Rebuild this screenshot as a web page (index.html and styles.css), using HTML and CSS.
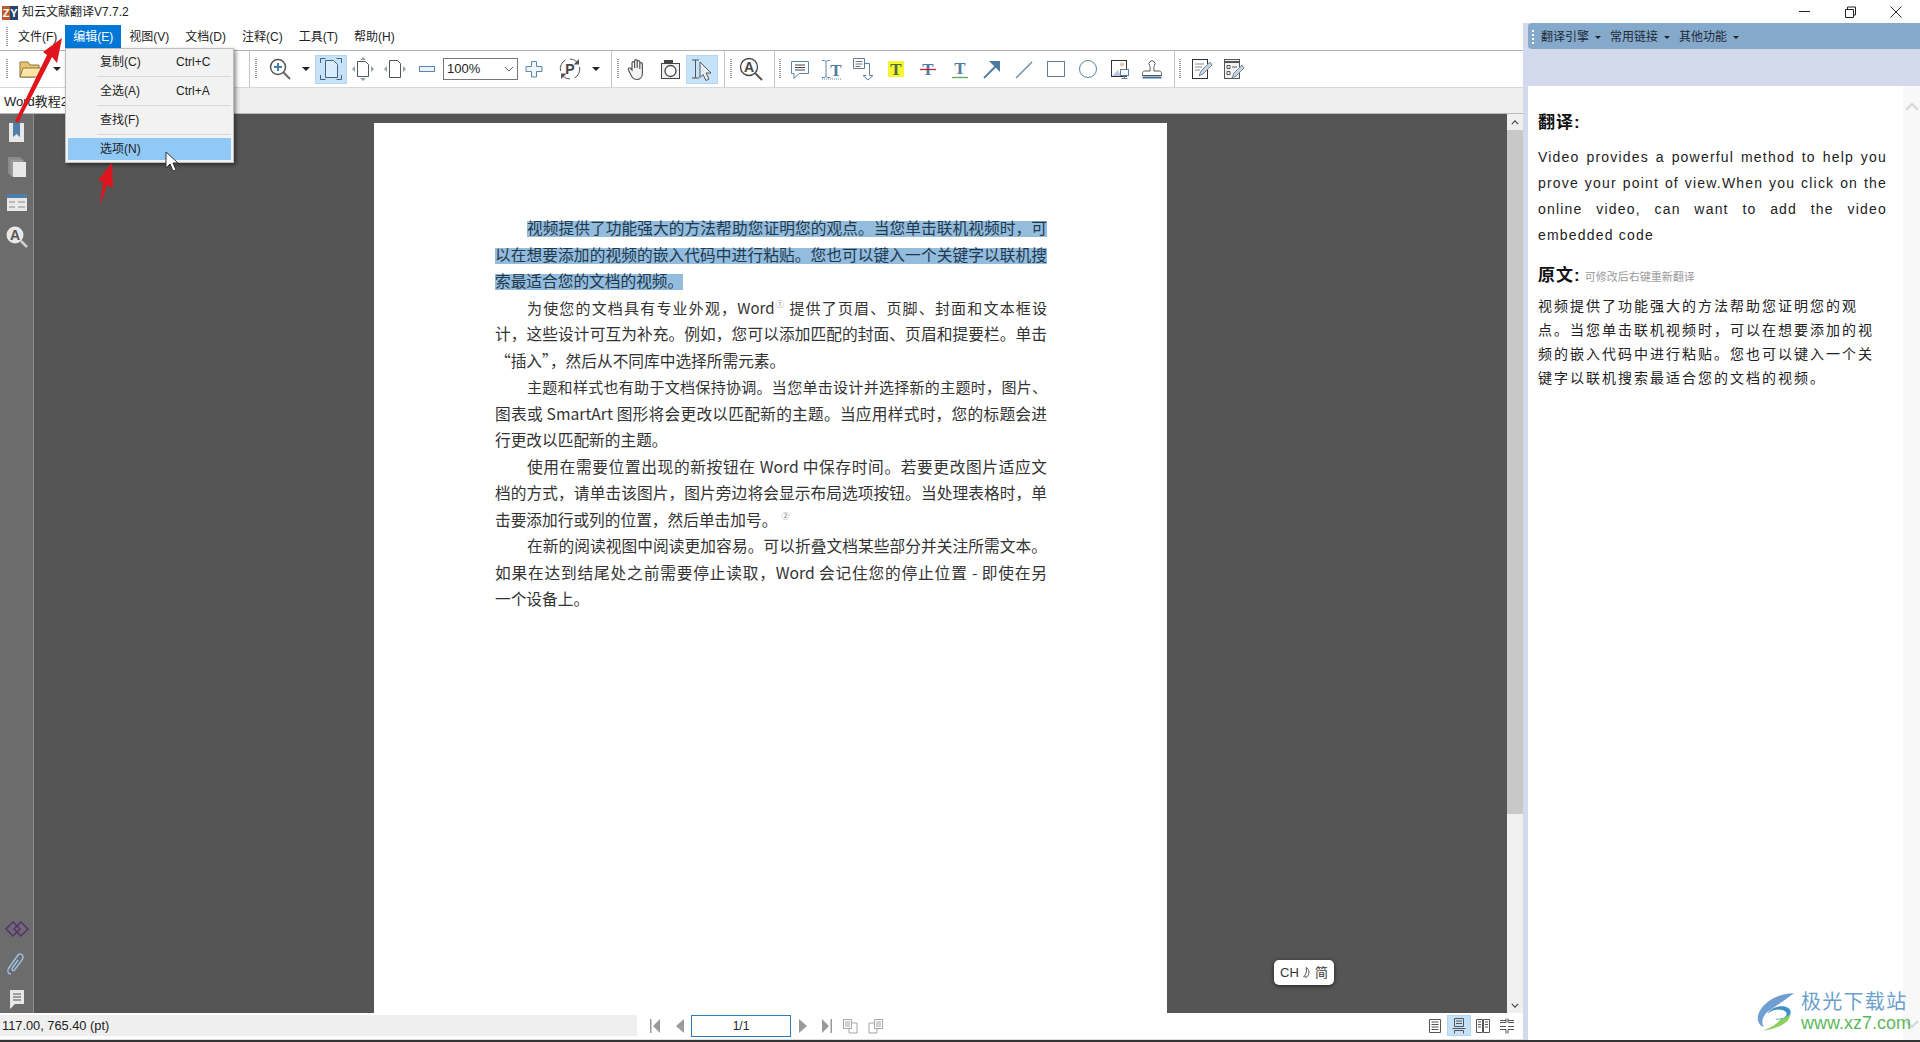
FILE: index.html
```html
<!DOCTYPE html>
<html lang="zh">
<head>
<meta charset="utf-8">
<title>知云文献翻译V7.7.2</title>
<link rel="stylesheet" href="styles.css">
</head>
<body>
<div class="app">
  <header class="titlebar">
    <div class="logo"><span class="logo-z">Z</span><span class="logo-y">Y</span></div>
    <div class="title">知云文献翻译V7.7.2</div>
    <div class="winbtns">
      <svg class="winbtn" viewBox="0 0 46 24"><path d="M18 11.5h11" stroke="#222" fill="none"/></svg>
      <svg class="winbtn" viewBox="0 0 46 24"><path d="M18.5 9.5h8v8h-8zM20.5 9.5v-2.5h8v8h-2" stroke="#222" fill="none"/></svg>
      <svg class="winbtn" viewBox="0 0 46 24"><path d="M17.5 6.5l11 11M28.5 6.5l-11 11" stroke="#222" fill="none"/></svg>
    </div>
  </header>
  <div class="body">
    <div class="leftcol">
      <nav class="menubar">
        <i class="grip grip-menu"></i>
        <span class="mitem">文件(F)</span>
        <span class="mitem mitem-on">编辑(E)</span>
        <span class="mitem">视图(V)</span>
        <span class="mitem">文档(D)</span>
        <span class="mitem">注释(C)</span>
        <span class="mitem">工具(T)</span>
        <span class="mitem">帮助(H)</span>
      </nav>
      <div class="toolbar">
        <i class="grip g1"></i>
        <span class="tool t-folder"><svg class="ic" viewBox="0 0 24 24"><path d="M1 20V5h8l2 3h9v12z" fill="#e9c46f" stroke="#8a7440"/><path d="M1 20l3-9h19l-3 9z" fill="#fbe6a6" stroke="#8a7440"/></svg></span>
        <span class="drop"><i class="tri"></i></span>
        <i class="sep s-a"></i>
        <i class="grip g2"></i>
        <span class="tool t-zoom"><svg class="ic" viewBox="0 0 24 24"><circle cx="10" cy="10" r="7.5" fill="#fff" stroke="#555" stroke-width="1.5"/><path d="M10 6v8M6 10h8" stroke="#3f7fb5" stroke-width="2"/><path d="M15.5 15.5L22 22" stroke="#666" stroke-width="2"/></svg></span>
        <span class="drop d-zoom"><i class="tri"></i></span>
        <span class="tool tool-on"><svg class="ic" viewBox="0 0 24 24"><path d="M6.500 3.500h8l4 4v13h-12z" fill="#d8ecfb" stroke="#45617a"/><path d="M1.500 6V1.500h5M22.500 6V1.500h-5M1.500 18v4.500h5M22.500 18v4.500h-5" fill="none" stroke="#45617a"/></svg></span>
        <span class="tool"><svg class="ic" viewBox="0 0 24 24"><path d="M6.500 4.500h8l3 3v12h-11z" fill="#fff" stroke="#555"/><path d="M12 0l3 3H9zM12 24l3-3H9zM1 12l3-3v6zM23 12l-3-3v6z" fill="#8aa0b5"/></svg></span>
        <span class="tool"><svg class="ic" viewBox="0 0 24 24"><path d="M6.500 3.500h8l3 3v14h-11z" fill="#fff" stroke="#555"/><path d="M1 12l3-3v6zM23 12l-3-3v6z" fill="#8aa0b5"/></svg></span>
        <span class="tool"><svg class="ic" viewBox="0 0 24 24"><rect x="4.500" y="9.500" width="15" height="5" fill="#eaf2f9" stroke="#5d86aa"/></svg></span>
        <div class="select"><span>100%</span><svg class="chev" viewBox="0 0 10 6"><path d="M1 1l4 4 4-4" fill="none" stroke="#666"/></svg></div>
        <span class="tool"><svg class="ic" viewBox="0 0 24 24"><path d="M9.500 4.500h5v5h5.500v5h-5.500v5.500h-5v-5.500H4v-5h5.500z" fill="#f2f7fb" stroke="#5d86aa"/></svg></span>
        <span class="tool t-p"><svg class="ic" viewBox="0 0 24 24"><path d="M2.500 14a10 10 0 0 1 5-11M12 2a10 10 0 0 1 7 3M21.500 10a10 10 0 0 1-5 11M12 22a10 10 0 0 1-7-3" fill="none" stroke="#555"/><path d="M21 2v5.500h-5.500zM3 22v-5.500h5.500z" fill="#555"/><text x="12" y="17" class="ptxt" text-anchor="middle">P</text></svg></span>
        <span class="drop d-p"><i class="tri"></i></span>
        <i class="sep s-b"></i>
        <i class="grip g3"></i>
        <span class="tool t-hand"><svg class="ic" viewBox="0 0 24 24"><path d="M7 13V6a1.300 1.300 0 0 1 2.600 0v5V4a1.300 1.300 0 0 1 2.600 0v7V5a1.300 1.300 0 0 1 2.600 0v7V7a1.300 1.300 0 0 1 2.600 0v9c0 4-2.500 6.500-5.500 6.500s-4-1-5.500-3.500L3.500 13c-1-1.500 1-3 2.200-1.500z" fill="#f4f4f4" stroke="#555" stroke-width="1.200"/></svg></span>
        <span class="tool t-cam"><svg class="ic" viewBox="0 0 24 24"><rect x="3.500" y="6.500" width="18" height="15" fill="#efefef" stroke="#444"/><rect x="6" y="3" width="9" height="4" fill="#444"/><circle cx="12.500" cy="14" r="5.500" fill="#fff" stroke="#444" stroke-width="1.300"/></svg></span>
        <span class="tool tool-on"><svg class="ic" viewBox="0 0 24 24"><path d="M2 3h7M5.500 3v18M2 21h7" fill="none" stroke="#555"/><path d="M10 5l11 11h-5l3 6-3 1.500-3-6-3 3z" fill="#e6f0f8" stroke="#555"/></svg></span>
        <i class="sep s-c"></i>
        <i class="grip g4"></i>
        <span class="tool t-a"><svg class="ic" viewBox="0 0 24 24"><circle cx="10" cy="10" r="8.500" fill="#fff" stroke="#444" stroke-width="1.300"/><text x="10" y="15" class="atxt" text-anchor="middle">A</text><path d="M16 16l7 7" stroke="#555" stroke-width="2"/></svg></span>
        <i class="sep s-c2"></i>
        <i class="grip g5"></i>
        <span class="tool t-c"><svg class="ic" viewBox="0 0 24 24"><path d="M3.500 4.500h17v12H11l-5 5v-5H3.500z" fill="#fff" stroke="#5d86aa"/><path d="M7 8h10M7 10.500h10M7 13h10" stroke="#444"/></svg></span>
        <span class="tool"><svg class="ic" viewBox="0 0 24 24"><path d="M2 3.500h2.500l1.500 1 1.500-1H10M6 4.500v15M2 20.500h2.500l1.500-1 1.500 1H10" fill="none" stroke="#5d86aa"/><text x="16" y="19" class="ttxt" text-anchor="middle">T</text><path d="M2 22h20" stroke="#5d86aa" stroke-dasharray="1 1"/></svg></span>
        <span class="tool"><svg class="ic" viewBox="0 0 24 24"><path d="M1.500 1.500h11v10h-11z" fill="#fff" stroke="#5d7f9c"/><path d="M3.500 4.500h7M3.500 7h7M3.500 9.500h5" stroke="#777"/><path d="M13 6.500h4.500v12h3.500l-5 4.500-5-4.500h3.500" fill="#fff" stroke="#5d7f9c"/></svg></span>
        <span class="tool"><svg class="ic" viewBox="0 0 24 24"><rect x="4" y="4" width="16" height="16" fill="#f5f531"/><text x="12" y="18" class="ttxt ttxt-olive" text-anchor="middle">T</text></svg></span>
        <span class="tool"><svg class="ic" viewBox="0 0 24 24"><text x="12" y="18" class="ttxt" text-anchor="middle">T</text><path d="M4 12.500h16" stroke="#d11b3a" stroke-width="1.300"/></svg></span>
        <span class="tool"><svg class="ic" viewBox="0 0 24 24"><text x="12" y="17" class="ttxt" text-anchor="middle">T</text><path d="M4 20.500h16" stroke="#5aa55a" stroke-width="1.300"/></svg></span>
        <span class="tool"><svg class="ic" viewBox="0 0 24 24"><path d="M4 21L18 7" stroke="#4f7aa0" stroke-width="1.800"/><path d="M20 4v11l-11-11z" fill="#4f7aa0"/></svg></span>
        <span class="tool"><svg class="ic" viewBox="0 0 24 24"><path d="M4 21L20 5" stroke="#6f8ba5" stroke-width="1.500"/></svg></span>
        <span class="tool"><svg class="ic" viewBox="0 0 24 24"><rect x="3.500" y="4.500" width="17" height="15" fill="#fff" stroke="#5d7f9c"/></svg></span>
        <span class="tool"><svg class="ic" viewBox="0 0 24 24"><circle cx="12" cy="12" r="8.500" fill="#fff" stroke="#5d7f9c"/></svg></span>
        <span class="tool"><svg class="ic" viewBox="0 0 24 24"><rect x="3.500" y="3.500" width="15" height="16" fill="#fff" stroke="#333"/><circle cx="14" cy="7.500" r="2" fill="#e9c49a"/><path d="M4 19l6-6 3 6z" fill="#b9c9e2"/><rect x="12.500" y="12.500" width="8" height="6" fill="#fff" stroke="#5d7f9c"/><path d="M16.500 18.500v3M13.500 21.500h6" stroke="#5d7f9c"/></svg></span>
        <span class="tool"><svg class="ic" viewBox="0 0 24 24"><path d="M9.500 8.500a3 3 0 1 1 5 0c-.8 1-.8 2-.5 5.500h5.500c1 0 2 1 2 2.500v2h-19v-2c0-1.500 1-2.500 2-2.500H10c.3-3.500.3-4.500-.5-5.500z" fill="#fff" stroke="#555"/><path d="M2.500 20.500h19" stroke="#3f6f9f" stroke-width="2"/></svg></span>
        <i class="sep s-c"></i>
        <i class="grip g5"></i>
        <span class="tool t-e"><svg class="ic" viewBox="0 0 24 24"><rect x="3.500" y="2.500" width="15" height="19" fill="#fff" stroke="#333"/><path d="M6 7h9M6 10h7M6 13h5" stroke="#888"/><path d="M10 19l2-5 9-9 2 3-9 9z" fill="#c9d3de" stroke="#6f8ba5"/></svg></span>
        <span class="tool"><svg class="ic" viewBox="0 0 24 24"><rect x="3.500" y="2.500" width="15" height="19" fill="#f4f4f4" stroke="#555"/><path d="M3.500 5h15" stroke="#555" stroke-width="2"/><path d="M6 8.500h3v3H6zM6 14.500h3v3H6zM11 10h5" fill="none" stroke="#555"/><path d="M11 21l2-5 8-8 2 3-8 8z" fill="#c9d3de" stroke="#6f8ba5"/></svg></span>
      </div>
      <div class="tabs"><div class="tab">Word教程2</div></div>
      <main class="workspace">
        <aside class="sidebar">
          <div class="side-group">
            <svg class="ic" viewBox="0 0 24 24"><path d="M4 3h15v19H4z" fill="#e8e8e8"/><path d="M8 3h7v14l-3.500-3L8 17z" fill="#4f7fa8"/></svg>
            <svg class="ic" viewBox="0 0 24 24"><path d="M3 2h13v3H6v14H3z" fill="#8a8a8a"/><path d="M5.500 4.500h13v3h-10v14h-3z" fill="#9a9a9a"/><rect x="8" y="7" width="13" height="15" fill="#e8e8e8"/></svg>
            <svg class="ic" viewBox="0 0 24 24"><rect x="2" y="4" width="20" height="4" fill="#4f7fa8"/><rect x="2" y="8" width="20" height="13" fill="#e8e8e8"/><path d="M4 12h6M13 12h7M4 17h6M13 17h7" stroke="#8a8a8a"/></svg>
            <svg class="ic" viewBox="0 0 24 24"><circle cx="10" cy="10" r="8.500" fill="#e8e8e8"/><text x="10" y="15" class="atxt atxt-side" text-anchor="middle">A</text><path d="M16 16l6 6" stroke="#cfcfcf" stroke-width="2.500"/></svg>
          </div>
          <div class="side-group side-bottom">
            <svg class="ic" viewBox="0 0 24 24"><path d="M8 5l7 7-7 7-7-7zM16 5l7 7-7 7-7-7z" fill="none" stroke="#5b2e73" stroke-width="1.500"/></svg>
            <svg class="ic" viewBox="0 0 24 24"><path d="M6 22c-3 0-4-3-2.500-5.500L13 3c1.500-2 5-1 5 2 0 1-.5 2-1 3L9.500 18c-1 1.200-3 .5-2.500-1.500L13 8" fill="none" stroke="#9fc0e6" stroke-width="1.400"/></svg>
            <svg class="ic" viewBox="0 0 24 24"><path d="M5 3h14v14H10l-5 5z" fill="#e8e8e8"/><path d="M8 7h8M8 10h8M8 13h8" stroke="#555"/></svg>
          </div>
        </aside>
        <section class="canvas">
          <article class="page">
            <div class="ln ind sel">视频提供了功能强大的方法帮助您证明您的观点。当您单击联机视频时，可</div>
            <div class="ln sel">以在想要添加的视频的嵌入代码中进行粘贴。您也可以键入一个关键字以联机搜</div>
            <div class="ln sel ln-end">索最适合您的文档的视频。</div>
            <div class="ln ind tight">为使您的文档具有专业外观，Word<sup class="fn">①</sup> 提供了页眉、页脚、封面和文本框设</div>
            <div class="ln">计，这些设计可互为补充。例如，您可以添加匹配的封面、页眉和提要栏。单击</div>
            <div class="ln ln-last">“插入”，然后从不同库中选择所需元素。</div>
            <div class="ln ind tight">主题和样式也有助于文档保持协调。当您单击设计并选择新的主题时，图片、</div>
            <div class="ln">图表或 SmartArt 图形将会更改以匹配新的主题。当应用样式时，您的标题会进</div>
            <div class="ln ln-last">行更改以匹配新的主题。</div>
            <div class="ln ind">使用在需要位置出现的新按钮在 Word 中保存时间。若要更改图片适应文</div>
            <div class="ln">档的方式，请单击该图片，图片旁边将会显示布局选项按钮。当处理表格时，单</div>
            <div class="ln ln-last">击要添加行或列的位置，然后单击加号。<sup class="fn fn-far">②</sup></div>
            <div class="ln ind">在新的阅读视图中阅读更加容易。可以折叠文档某些部分并关注所需文本。</div>
            <div class="ln">如果在达到结尾处之前需要停止读取，Word 会记住您的停止位置 - 即使在另</div>
            <div class="ln ln-last">一个设备上。</div>
          </article>
          <div class="chip"><span>CH</span><svg class="moon" viewBox="0 0 12 14"><path d="M5 1c4 2 5 8 0 12 1.500-.5-1-1-3-1 3-2 4-7 3-11z" fill="none" stroke="#333"/></svg><span>简</span></div>
        </section>
        <div class="vscroll">
          <div class="vbtn"><svg class="sc" viewBox="0 0 10 6"><path d="M1 5l4-4 4 4" fill="none" stroke="#444" stroke-width="1.500"/></svg></div>
          <div class="vthumb"></div>
          <div class="vtrack"></div>
          <div class="vbtn"><svg class="sc" viewBox="0 0 10 6"><path d="M1 1l4 4 4-4" fill="none" stroke="#444" stroke-width="1.500"/></svg></div>
        </div>
      </main>
      <footer class="status">
        <div class="coords">117.00, 765.40 (pt)</div>
        <div class="pager">
          <svg class="nav nav-first" viewBox="0 0 12 16"><path d="M1 1h1.500v14H1zM11 1v14L4 8z" fill="#9a9a9a"/></svg>
          <svg class="nav nav-prev" viewBox="0 0 12 16"><path d="M10 1v14L2 8z" fill="#9a9a9a"/></svg>
          <div class="pageinput">1/1</div>
          <svg class="nav nav-next" viewBox="0 0 12 16"><path d="M2 1v14l8-7z" fill="#9a9a9a"/></svg>
          <svg class="nav nav-last" viewBox="0 0 12 16"><path d="M9.500 1H11v14H9.500zM1 1v14l7-7z" fill="#9a9a9a"/></svg>
          <svg class="nav nav-a" viewBox="0 0 16 16"><path d="M.5 1.500h8v9h-8zM2 4h5M2 6h5M2 8h5M9 5h5v10H6v-4" fill="none" stroke="#a5a5a5"/></svg>
          <svg class="nav nav-b" viewBox="0 0 16 16"><path d="M7.500 1.500h8v9h-8zM9 4h5M9 6h5M9 8h5M7 5H2v10h8v-4" fill="none" stroke="#a5a5a5"/></svg>
        </div>
        <div class="views">
          <span class="view"><svg class="vi" viewBox="0 0 14 16"><path d="M1.500 1.500h11v13h-11zM3.500 4h7M3.500 6.500h7M3.500 9h7M3.500 11.500h7" fill="none" stroke="#555"/></svg></span>
          <span class="view view-on"><svg class="vi" viewBox="0 0 14 16"><path d="M2.500 .5h9v8h-9zM4 3h6M4 5.500h6M.5 10.500h13M2.500 12.500h9v3M2.500 12.500v3" fill="none" stroke="#555"/></svg></span>
          <span class="view"><svg class="vi" viewBox="0 0 14 16"><path d="M.5 1.500h6v13h-6zM7.500 1.500h6v13h-6zM2 4h3M2 6.500h3M2 9h3M9 4h3M9 6.500h3M9 9h3" fill="none" stroke="#555"/></svg></span>
          <span class="view"><svg class="vi" viewBox="0 0 14 16"><path d="M0 4.500h6v-4M8 .5v4h6M0 8.500h6M8 8.500h6M0 11.500h6v4M8 15.500v-4h6M0 2.500h6M8 2.500h6" fill="none" stroke="#555"/></svg></span>
        </div>
      </footer>
    </div>
    <aside class="rightcol">
      <div class="rbar">
        <i class="dots"></i>
        <span class="rmenu">翻译引擎<i class="tri tri-s"></i></span>
        <span class="rmenu">常用链接<i class="tri tri-s"></i></span>
        <span class="rmenu">其他功能<i class="tri tri-s"></i></span>
      </div>
      <div class="rgap"></div>
      <div class="rmain">
        <div class="rtext">
          <h2 class="rh rh-first">翻译:</h2>
          <p class="en">Video provides a powerful method to help you prove your point of view.When you click on the online video, can want to add the video embedded code</p>
          <h2 class="rh rh-second">原文:<small class="hint">可修改后右键重新翻译</small></h2>
          <p class="zh">视频提供了功能强大的方法帮助您证明您的观点。当您单击联机视频时，可以在想要添加的视频的嵌入代码中进行粘贴。您也可以键入一个关键字以联机搜索最适合您的文档的视频。</p>
        </div>
        <div class="rscroll">
          <svg class="rchev" viewBox="0 0 14 8"><path d="M1 7l6-6 6 6" fill="none" stroke="#d5d5d5" stroke-width="2"/></svg>
          <svg class="rchev" viewBox="0 0 14 8"><path d="M1 1l6 6 6-6" fill="none" stroke="#d5d5d5" stroke-width="2"/></svg>
        </div>
        <div class="watermark">
          <svg class="wm-logo" viewBox="0 0 44 44">
            <path d="M40 2C22 3 6 12 2 26c-1 6 2 10 6 12-3-6-1-14 8-19C24 14 32 8 40 2z" fill="#6f9fd0"/>
            <path d="M12 24c6-6 18-6 20-1 1 4-5 7-12 6 3 2 12 1 16-5 2-5-4-9-11-8-6 1-11 4-13 8z" fill="#3f8fc8"/>
            <path d="M36 24c0 8-10 15-30 18 10-4 17-8 20-13 5-1 8-3 10-5z" fill="#8ccf5f"/>
          </svg>
          <div class="wm-text"><div class="wm-cn">极光下载站</div><div class="wm-en">www.xz7.com</div></div>
        </div>
      </div>
    </aside>
  </div>
  <div class="taskstrip"></div>

  <div class="dropdown">
    <div class="dd-item"><span class="dd-label">复制(C)</span><span>Ctrl+C</span></div>
    <div class="dd-sep"></div>
    <div class="dd-item"><span class="dd-label">全选(A)</span><span>Ctrl+A</span></div>
    <div class="dd-sep"></div>
    <div class="dd-item"><span class="dd-label">查找(F)</span></div>
    <div class="dd-sep"></div>
    <div class="dd-item dd-on"><span class="dd-label">选项(N)</span></div>
  </div>

  <svg class="overlay" viewBox="0 0 1920 1042">
    <polygon points="62,38 57,63 52,57 18,123 15,121 47,55 43,52" fill="#e0141c"/>
    <polygon points="112,163 113,188 107,185 101,203 100,203 103,182 98,180" fill="#e0141c"/>
    <polygon points="166,152 166,168 170,164 173,171 176,170 173,163 178,163" fill="#fff" stroke="#333"/>
  </svg>
</div>
</body>
</html>
```
FILE: styles.css
```css
* { box-sizing: border-box; }
html, body { margin: 0; padding: 0; height: 100%; overflow: hidden; }
body { font: 12px/1.2 "Liberation Sans", "Noto Sans CJK SC", sans-serif; color: #222; background: #fff; }
.app { position: relative; width: 1920px; height: 1042px; display: flex; flex-direction: column; overflow: hidden; }

.titlebar { height: 23px; flex: none; display: flex; align-items: center; background: #fff; }
.logo { display: flex; margin: 2px 4px 0 2px; width: 16px; height: 14px; }
.logo-z, .logo-y { width: 8px; height: 14px; color: #fff; font-weight: bold; font-size: 11px; line-height: 14px; text-align: center; }
.logo-z { background: #c0562b; }
.logo-y { background: #25456f; }
.title { font-size: 12px; color: #222; margin-top: 2px; }
.winbtns { margin-left: auto; margin-right: 1px; display: flex; }
.winbtn { width: 46px; height: 24px; }

.body { flex: 1; min-height: 0; display: flex; }
.leftcol { width: 1523px; flex: none; display: flex; flex-direction: column; }

.menubar { height: 28px; flex: none; display: flex; align-items: stretch; padding: 2px 0; border-bottom: 1px solid #b4b4b4; }
.grip { display: block; width: 2px; height: 20px; flex: none; background: repeating-linear-gradient(to bottom, #999 0 1px, transparent 1px 2px); }
.grip-menu { margin: 2px 2px 0 6px; }
.mitem { padding: 1px 8px 0; line-height: 23px; color: #222; }
.mitem-on { background: #0078d7; color: #fff; margin-left: 0; }

.toolbar { height: 37px; flex: none; display: flex; align-items: center; border-bottom: 1px solid #d8d8d8; background: #fff; }
.tool { width: 32px; height: 29px; flex: none; display: flex; align-items: center; justify-content: center; }
.tool-on { background: #c6e2f9; border: 1px solid #b6d6ef; }
.ic { width: 24px; height: 24px; display: block; flex: none; }
.drop { width: 20px; height: 29px; flex: none; display: flex; align-items: center; justify-content: center; }
.tri { display: block; width: 0; height: 0; border-left: 4px solid transparent; border-right: 4px solid transparent; border-top: 4px solid #222; }
.tri-s { display: inline-block; margin-left: 6px; vertical-align: middle; border-left-width: 3px; border-right-width: 3px; border-top-width: 3px; }
.sep { display: block; width: 1px; height: 36px; flex: none; background: #c4c4c4; }

.g1 { margin-left: 6px; }
.t-folder { margin-left: 7px; }
.s-a { margin-left: 182px; }
.g2 { margin-left: 5px; }
.t-zoom { margin-left: 7px; }
.d-zoom { width: 19px; }
.t-p { margin-left: 4px; }
.s-b { margin-left: 5px; }
.g3 { margin-left: 5px; }
.t-hand { margin-left: 2px; }
.t-cam { margin-left: 1px; }
.s-c { margin-left: 6px; }
.s-c2 { margin-left: 7px; }
.g4 { margin-left: 5px; }
.g5 { margin-left: 4px; }
.t-a { margin-left: 3px; }
.t-c { margin-left: 3px; }
.t-e { margin-left: 4px; }

.select { width: 75px; height: 22px; flex: none; border: 1px solid #777; display: flex; align-items: center; justify-content: space-between; padding: 0 3px 0 3px; font-size: 13px; color: #222; }
.chev { width: 10px; height: 6px; }
.ptxt { font: bold 14px "Liberation Sans", sans-serif; fill: #444; }
.atxt { font: bold 14px "Liberation Sans", sans-serif; fill: #444; }
.atxt-side { fill: #555; }
.ttxt { font: bold 17px "Liberation Serif", serif; fill: #4f7aa0; }
.ttxt-olive { fill: #4f6a3f; }

.tabs { height: 26px; flex: none; background: #efefef; border-bottom: 1px solid #b8b8b8; display: flex; }
.tab { width: 120px; background: #fff; padding: 0 4px; line-height: 27px; font-size: 13px; color: #222; }

.workspace { flex: 1; min-height: 0; display: flex; background: #555; }
.sidebar { width: 34px; flex: none; background: #6c6c6c; border-right: 1px solid #8c8c8c; display: flex; flex-direction: column; justify-content: space-between; align-items: center; padding: 6px 0 2px; }
.side-group { display: flex; flex-direction: column; gap: 11px; }
.side-bottom { gap: 11px; }
.canvas { flex: 1; min-width: 0; position: relative; display: flex; justify-content: center; overflow: hidden; }
.page { width: 793px; flex: none; margin-top: 9px; background: #fff; padding: 92px 120px 0 121px; height: 900px; font-family: "Noto Sans CJK SC", "Liberation Sans", sans-serif; font-size: 15.7px; color: #333; }
.ln { height: 26.5px; line-height: 26.5px; white-space: nowrap; text-align: justify; text-align-last: justify; }
.ind { padding-left: 32px; }
.tight { font-size: 15px; }
.ln-last { text-align-last: left; }
.sel { background: linear-gradient(#93bcdd, #93bcdd) no-repeat; background-size: 100% 16px; background-position: 0 6px; background-clip: content-box; color: #22394d; }
.ln-end { width: fit-content; text-align-last: left; }
.fn { font-size: 8px; line-height: 0; vertical-align: 7px; color: #777; }
.fn-far { margin-left: 4px; }
.chip { position: absolute; left: 1240px; top: 846px; width: 60px; height: 25px; background: #fff; border-radius: 5px; box-shadow: 0 1px 4px rgba(0,0,0,.6); display: flex; align-items: center; justify-content: center; gap: 3px; font-size: 13px; color: #333; }
.moon { width: 10px; height: 13px; }

.vscroll { width: 16px; flex: none; display: flex; flex-direction: column; background: #f0f0f0; }
.vbtn { height: 16px; flex: none; display: flex; align-items: center; justify-content: center; background: #f0f0f0; }
.sc { width: 8px; height: 5px; }
.vthumb { height: 684px; flex: none; background: #c8c8c8; }
.vtrack { flex: 1; }

.status { height: 27px; flex: none; display: flex; align-items: stretch; padding: 2px 0 3px; background: #fff; border-bottom: 1px solid #ddd; }
.coords { width: 637px; flex: none; background: #efefef; padding-left: 2px; line-height: 22px; font-size: 12.8px; color: #222; }
.pager { flex: none; display: flex; align-items: center; padding-left: 12px; }
.nav { width: 12px; height: 16px; flex: none; }
.nav-prev { margin-left: 13px; }
.pageinput { width: 100px; height: 22px; margin-left: 5px; border: 1px solid #2c7cb8; text-align: center; line-height: 20px; font-size: 12px; }
.nav-next { margin-left: 6px; }
.nav-last { margin-left: 12px; }
.nav-a { width: 16px; margin-left: 10px; }
.nav-b { width: 16px; margin-left: 8px; }
.views { margin-left: auto; display: flex; align-items: stretch; padding-right: 4px; }
.view { width: 24px; display: flex; align-items: center; justify-content: center; }
.view-on { background: #c6e2f9; border: 1px solid #b6d6ef; }
.vi { width: 14px; height: 16px; }

.rightcol { flex: 1; min-width: 0; background: #d3daec; padding-left: 5px; display: flex; flex-direction: column; }
.rbar { height: 26px; flex: none; background: #84a9cb; border-radius: 4px 0 0 4px; display: flex; align-items: center; padding: 2px 0 0 4px; gap: 9px; }
.dots { display: block; width: 2px; height: 14px; background: repeating-linear-gradient(to bottom, #fff 0 2px, transparent 2px 4px); margin-right: -2px; }
.rmenu { color: #1e2a36; font-size: 12px; }
.rgap { height: 37px; flex: none; }
.rmain { flex: 1; min-height: 0; position: relative; display: flex; background: #fff; }
.rtext { flex: 1; min-width: 0; padding: 25px 16px 0 10px; }
.rh { margin: 16px 0 0; height: 24px; line-height: 24px; font-size: 17px; font-weight: bold; color: #111; letter-spacing: 1px; }
.rh-first { margin-top: 0; }
.hint { font-size: 11px; font-weight: normal; color: #9a9a9a; margin-left: 4px; letter-spacing: 0; }
.en { margin: 9px 0 0; font-size: 14px; line-height: 26px; letter-spacing: 1.2px; text-align: justify; color: #222; }
.zh { margin: 6px 0 0; font-size: 14px; line-height: 24px; letter-spacing: 2px; color: #222; }
.rscroll { width: 17px; flex: none; background: #f8f8f8; display: flex; flex-direction: column; justify-content: space-between; align-items: center; padding: 17px 0 12px; }
.rchev { width: 14px; height: 8px; }
.watermark { position: absolute; right: 9px; bottom: 7px; display: flex; align-items: center; gap: 3px; }
.wm-logo { width: 42px; height: 42px; }
.wm-cn { font-size: 20px; line-height: 22px; letter-spacing: 1.3px; color: #6c9fcb; }
.wm-en { font-size: 18px; line-height: 20px; color: #5cb85c; }

.taskstrip { height: 2px; flex: none; background: #333; }

.dropdown { position: absolute; left: 65px; top: 48px; width: 169px; height: 115px; background: #f2f2f2; border: 1px solid #bdbdbd; box-shadow: 2px 2px 4px rgba(0,0,0,.45); padding: 2px; }
.dd-item { height: 22px; display: flex; align-items: center; font-size: 12px; color: #222; }
.dd-label { width: 76px; margin-left: 32px; flex: none; }
.dd-sep { height: 7px; margin-left: 29px; background: linear-gradient(#d9d9d9, #d9d9d9) no-repeat 0 3px; background-size: 100% 1px; }
.dd-on { background: #90c8f6; }
.overlay { position: absolute; left: 0; top: 0; width: 1920px; height: 1042px; pointer-events: none; }
```
